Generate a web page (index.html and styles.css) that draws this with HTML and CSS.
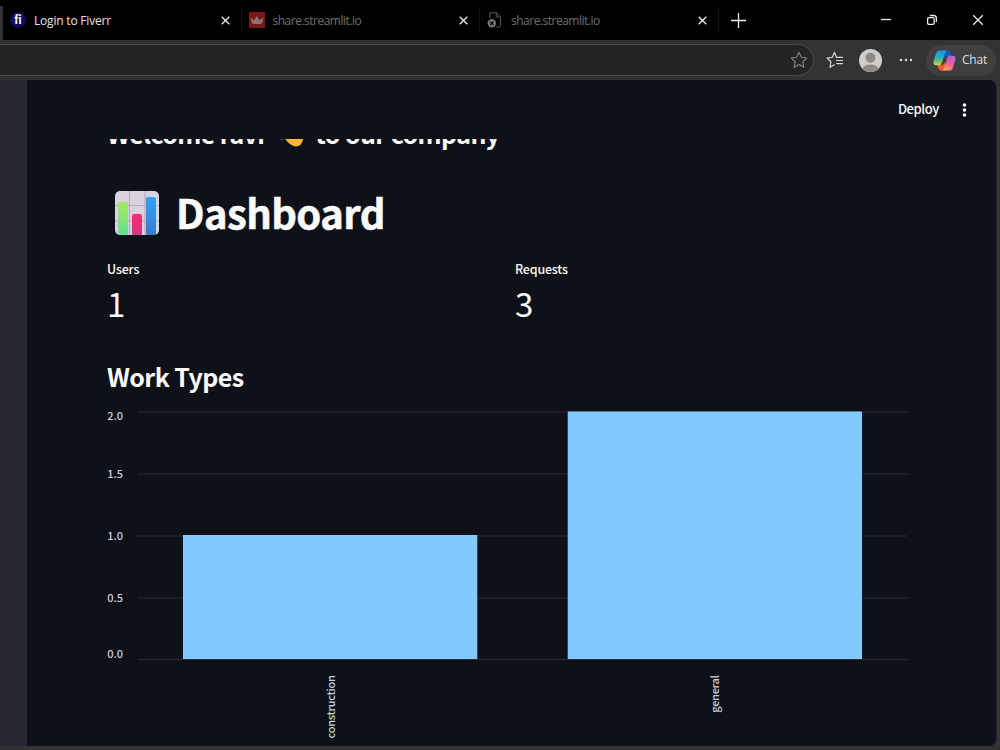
FILE: index.html
```html
<!DOCTYPE html>
<html lang="en">
<head>
    <meta charset="UTF-8">
    <meta name="viewport" content="width=device-width, initial-scale=1.0">
    <title>Dashboard</title>
    <link rel="stylesheet" href="styles.css">
</head>
<body>

<div class="tab-bar">
    <div class="tab active">
        <svg class="favicon" width="16" height="16" viewBox="0 0 16 16">
            <circle cx="8" cy="8" r="7.8" fill="#160c5c"/>
            <text class="fiverr-mark" x="8" y="12" text-anchor="middle">fi</text>
        </svg>
        <span class="tab-title">Login to Fiverr</span>
        <svg class="close" width="9" height="9" viewBox="0 0 9 9"><path d="M0.7 0.7L8.3 8.3M8.3 0.7L0.7 8.3"/></svg>
    </div>
    <div class="tab">
        <svg class="favicon" width="16" height="16" viewBox="0 0 16 16">
            <rect width="16" height="16" fill="#7c1718"/>
            <path d="M1.3 5.2L5 8.2L7.8 4.2L10.8 8.2L14.7 5.2L12.8 11.6Q8 12.6 3.2 11.6Z" fill="#8d7775"/>
        </svg>
        <span class="tab-title">share.streamlit.io</span>
        <svg class="close" width="9" height="9" viewBox="0 0 9 9"><path d="M0.7 0.7L8.3 8.3M8.3 0.7L0.7 8.3"/></svg>
    </div>
    <div class="tab">
        <svg class="favicon" width="16" height="16" viewBox="0 0 16 16" fill="none">
            <path d="M2.8 6V2Q2.8 0.8 4 0.8H9.3L13.6 5V13.5Q13.6 15 12.3 15H9.5M9.3 0.8V5H13.6" stroke="#5d5d5d"/>
            <circle cx="4.8" cy="11.3" r="4.2" fill="#757575"/>
            <path d="M3.2 9.7L6.4 12.9M6.4 9.7L3.2 12.9" stroke="#000" stroke-width="1.2"/>
        </svg>
        <span class="tab-title">share.streamlit.io</span>
        <svg class="close" width="9" height="9" viewBox="0 0 9 9"><path d="M0.7 0.7L8.3 8.3M8.3 0.7L0.7 8.3"/></svg>
    </div>
    <svg class="new-tab" width="15" height="15" viewBox="0 0 15 15"><path d="M0 7.5H15M7.5 0V15"/></svg>
    <div class="window-controls">
        <svg width="10" height="12" viewBox="0 0 10 12"><path d="M0 5.5H10"/></svg>
        <svg width="10" height="12" viewBox="0 0 10 12"><rect x="0.6" y="3.6" width="6.6" height="6.8" rx="1.3"/><path d="M2.8 1.5H6.6Q9.4 1.5 9.4 4.3V8"/></svg>
        <svg width="10" height="12" viewBox="0 0 10 12"><path d="M0.2 1.2L9.8 10.8M9.8 1.2L0.2 10.8"/></svg>
    </div>
</div>

<div class="toolbar">
    <div class="address-bar">
        <svg width="18" height="18" viewBox="0 0 18 18" fill="none" stroke="#858585" stroke-width="1.1" stroke-linejoin="round">
            <path d="M9 1.2L11.4 6.3L16.8 7L12.8 10.8L13.8 16.3L9 13.6L4.2 16.3L5.2 10.8L1.2 7L6.6 6.3Z"/>
        </svg>
    </div>
    <svg class="favorites" width="18" height="18" viewBox="0 0 18 18" fill="none" stroke="#d6d6d6" stroke-width="1.2" stroke-linejoin="round" stroke-linecap="round">
        <path d="M11 6.3H10.4L8.5 1.3L6.3 6.3L1 7L4.9 10.8L4 16.3L8.3 13.8M11 6.3H16.5M10.6 9.5H16.5M10.6 12.6H16.5"/>
    </svg>
    <svg class="avatar" width="23" height="23" viewBox="0 0 23 23">
        <circle cx="11.5" cy="11.5" r="11.5" fill="#cfcdcb"/>
        <circle cx="11.5" cy="8.8" r="5" fill="#8d8a87"/>
        <path d="M3.5 19.6Q5.5 15.4 11.5 15.4T19.5 19.6Q16 23 11.5 23T3.5 19.6Z" fill="#8d8a87"/>
    </svg>
    <svg class="more" width="14" height="4" viewBox="0 0 14 4" fill="#dedede">
        <circle cx="2" cy="2" r="1.2"/><circle cx="7" cy="2" r="1.2"/><circle cx="12" cy="2" r="1.2"/>
    </svg>
    <div class="chat-btn">
        <svg width="23" height="21" viewBox="0 0 23 21">
            <defs>
                <linearGradient id="cool" x1="0" y1="0" x2="0" y2="1">
                    <stop offset="0" stop-color="#159bea"/>
                    <stop offset=".45" stop-color="#27a9c4"/>
                    <stop offset=".75" stop-color="#7ac36b"/>
                    <stop offset="1" stop-color="#e7cf25"/>
                </linearGradient>
                <linearGradient id="warm" x1="0.7" y1="0" x2="0.3" y2="1">
                    <stop offset="0" stop-color="#b265e3"/>
                    <stop offset=".5" stop-color="#ee5b95"/>
                    <stop offset="1" stop-color="#ffa259"/>
                </linearGradient>
            </defs>
            <path d="M11 .5H15Q17 .5 17.6 3L18.4 6H14.5Q12 6 11 9Z" fill="#1756c8"/>
            <path d="M12 20.5H8Q6 20.5 5.4 18L4.6 15H8.5Q11 15 12 12Z" fill="#ee5932"/>
            <path d="M6.5 .5H14Q12.5 1 11.8 3.5L9 12.5Q8.2 15.3 5.5 15.3H3Q-.3 15.3 .7 11L3 3.5Q4 .5 6.5 .5Z" fill="url(#cool)"/>
            <path d="M16.5 20.5H9Q10.5 20 11.2 17.5L14 8.5Q14.8 5.7 17.5 5.7H20Q23.3 5.7 22.3 10L20 17.5Q19 20.5 16.5 20.5Z" fill="url(#warm)"/>
        </svg>
        <span>Chat</span>
    </div>
</div>

<div class="app">
    <div class="sidebar"></div>
    <div class="main">
        <div class="app-header">
            <span class="deploy">Deploy</span>
            <svg width="5" height="14" viewBox="0 0 5 14" fill="#fafafa">
                <circle cx="2.5" cy="2" r="1.8"/><circle cx="2.5" cy="7" r="1.8"/><circle cx="2.5" cy="12" r="1.8"/>
            </svg>
        </div>
        <div class="content">
            <h2 class="welcome">
                <span>Welcome ravi</span>
                <svg width="28" height="28" viewBox="0 0 28 28">
                    <path d="M1 17L2 20.5L4 20.3L6 21.8L8 20L5 16Z" fill="#164a80"/>
                    <path d="M8.5 19L13 6Q20 3 27 10V20Q26 27.5 19.5 27.5Q14 27 8.5 19Z" fill="#ffb636"/>
                </svg>
                <span>to our company</span>
            </h2>

            <h1 class="title">
                <svg width="44" height="44" viewBox="0 0 44 44">
                    <defs>
                        <linearGradient id="green" x1="0" y1="0" x2="0" y2="1"><stop offset="0" stop-color="#a8e957"/><stop offset="1" stop-color="#62df94"/></linearGradient>
                        <linearGradient id="pink" x1="0" y1="0" x2="0" y2="1"><stop offset="0" stop-color="#f02c70"/><stop offset="1" stop-color="#cf3b86"/></linearGradient>
                        <linearGradient id="blue" x1="0" y1="0" x2="0" y2="1"><stop offset="0" stop-color="#2fa3f7"/><stop offset="1" stop-color="#397bcf"/></linearGradient>
                    </defs>
                    <rect width="44" height="44" rx="5" fill="#d9d2df"/>
                    <path d="M14.5 0V44M30 0V44M0 14.5H44M0 30H44" stroke="#b6aec0" stroke-width="1.2"/>
                    <path d="M3 44V13Q3 11 5 11H11Q13 11 13 13V44Z" fill="url(#green)"/>
                    <path d="M17 44V25Q17 23 19 23H25Q27 23 27 25V44Z" fill="url(#pink)"/>
                    <path d="M31 44V8Q31 6 33 6H39Q41 6 41 8V44Z" fill="url(#blue)"/>
                </svg>
                <span>Dashboard</span>
            </h1>

            <div class="metrics">
                <div class="metric">
                    <div class="metric-label">Users</div>
                    <div class="metric-value">1</div>
                </div>
                <div class="metric">
                    <div class="metric-label">Requests</div>
                    <div class="metric-value">3</div>
                </div>
            </div>

            <h3 class="subtitle">Work Types</h3>

            <svg class="chart" width="800" height="345" viewBox="0 0 800 345">
                <g class="grid">
                    <path d="M31 12H800M31 74H800M31 136H800M31 198H800M31 259.5H800"/>
                </g>
                <rect x="76" y="135" width="294.3" height="124" fill="#83c9ff"/>
                <rect x="460.7" y="11.5" width="294.3" height="247.5" fill="#83c9ff"/>
                <g class="axis" text-anchor="end">
                    <text x="16" y="20.3">2.0</text>
                    <text x="16" y="78.2">1.5</text>
                    <text x="16" y="140.2">1.0</text>
                    <text x="16" y="202.2">0.5</text>
                    <text x="16" y="258">0.0</text>
                    <text class="x-label" transform="translate(227.5 275.5) rotate(-90)">construction</text>
                    <text class="x-label" transform="translate(612 275.5) rotate(-90)">general</text>
                </g>
            </svg>
        </div>
    </div>
</div>

</body>
</html>
```
FILE: styles.css
```css
* {
    box-sizing: border-box;
}
body {
    margin: 0;
    width: 1000px;
    height: 750px;
    overflow: hidden;
    background: #333333;
    font-family: "Noto Sans CJK SC", "Open Sans", sans-serif;
    color: #fafafa;
}
svg {
    display: block;
    flex-shrink: 0;
}

/* browser tabs */
.tab-bar {
    display: flex;
    align-items: center;
    height: 40px;
    padding-left: 3px;
    background: linear-gradient(#333, #333) 0 6px / 3px 34px no-repeat, #000;
    font-family: "Open Sans", sans-serif;
}
.tab {
    display: flex;
    align-items: center;
    width: 238.5px;
    height: 24px;
    padding: 0 11px 0 7px;
    border-right: 1px solid #151515;
}
.tab-title {
    flex: 1;
    margin-left: 8px;
    font-size: 12px;
    line-height: 20px;
    padding-top: 2px;
    letter-spacing: -0.5px;
    color: #707070;
}
.tab.active .tab-title {
    letter-spacing: -0.2px;
    color: #e4e4e4;
}
.fiverr-mark {
    font: bold 11px "Noto Sans CJK SC", sans-serif;
    fill: #fff;
}
.close, .new-tab, .window-controls svg {
    fill: none;
    stroke: #eee;
    stroke-width: 1.3;
}
.new-tab {
    margin-left: 12.5px;
}
.window-controls {
    display: flex;
    gap: 36px;
    margin-left: auto;
    padding-right: 17px;
}

/* address bar row */
.toolbar {
    display: flex;
    align-items: center;
    height: 40px;
    background: #333333;
}
.address-bar {
    display: flex;
    align-items: center;
    justify-content: flex-end;
    width: 814px;
    height: 32px;
    padding-right: 5px;
    background: #242424;
    border: 1px solid #4b4b48;
    border-left: 0;
    border-radius: 0 16px 16px 0;
}
.favorites {
    margin-left: 12px;
}
.avatar {
    margin-left: 15px;
}
.more {
    margin-left: 17px;
}
.chat-btn {
    display: flex;
    align-items: center;
    width: 70px;
    height: 31px;
    margin-left: 13px;
    padding-left: 7px;
    border-radius: 16px;
    background: #404040;
    font-family: "Open Sans", sans-serif;
    font-size: 12px;
    color: #dedede;
}
.chat-btn span {
    margin-left: 6px;
    padding-bottom: 1px;
    letter-spacing: -0.2px;
}

/* page */
.app {
    display: flex;
    width: 997px;
    height: 666px;
    border-radius: 0 8px 8px 0;
    border-right: 1px solid #24252a;
    background: #0e1117;
    overflow: hidden;
}
.sidebar {
    width: 27px;
    background: #262730;
}
.main {
    flex: 1;
}
.app-header {
    display: flex;
    align-items: center;
    justify-content: flex-end;
    gap: 23px;
    height: 59px;
    padding-right: 29px;
}
.deploy {
    padding-bottom: 2px;
    font-size: 13px;
    font-weight: 500;
    letter-spacing: -0.4px;
}
.content {
    height: 607px;
    padding: 0 89px 0 80px;
    overflow: hidden;
}
h1, h2, h3 {
    margin: 0;
    font-weight: bold;
}
/* scrolled under the header */
.welcome {
    display: flex;
    align-items: center;
    height: 36px;
    margin-top: -24px;
    font-size: 25px;
    line-height: 36px;
    letter-spacing: -0.6px;
    white-space: nowrap;
}
.welcome svg {
    margin: 0 11px 0 12px;
}
.title {
    display: flex;
    align-items: center;
    height: 50px;
    margin-top: 37px;
    padding-left: 8px;
    font-size: 40px;
    line-height: 50px;
    letter-spacing: -0.6px;
    -webkit-text-stroke: 0.5px #fafafa;
}
.title span {
    margin-left: 17px;
    padding-bottom: 2px;
}
.metrics {
    display: grid;
    grid-template-columns: 1fr 1fr;
    gap: 16px;
    margin-top: 20px;
}
.metric-label {
    font-size: 12.5px;
    font-weight: 500;
    line-height: 22px;
    letter-spacing: -0.2px;
}
.metric-value {
    font-size: 33px;
    line-height: 46px;
}
.subtitle {
    margin-top: 30px;
    font-size: 25px;
    line-height: 40px;
    height: 44px;
    letter-spacing: -0.6px;
}
.grid path {
    stroke: #2c2e34;
    stroke-width: 1;
}
.axis text {
    font-size: 11px;
    font-weight: 500;
    fill: #cdd0d8;
}
.axis .x-label {
    letter-spacing: -0.3px;
}
```
